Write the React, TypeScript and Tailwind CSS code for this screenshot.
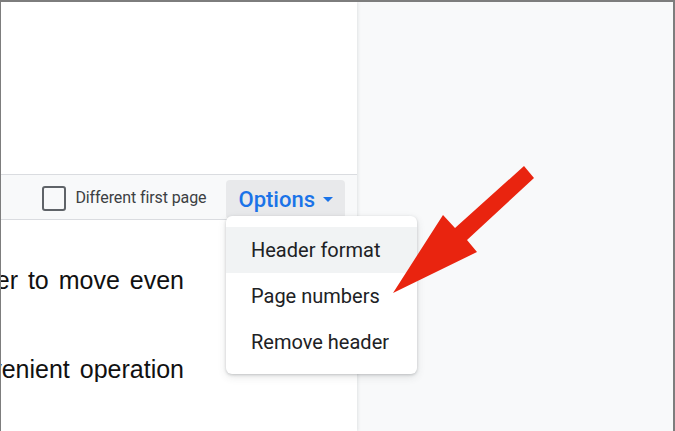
import React from "react";

export default function App() {
  return (
    <div className="relative w-[675px] h-[431px] overflow-hidden border-t-2 border-l border-r-2 border-[#7d7d7d] bg-[#f8f9fa] flex">
      <div className="w-[356px] h-full bg-white flex flex-col shadow-[1px_0_3px_rgba(60,64,67,0.12)] overflow-hidden">
        <div className="h-[172px] shrink-0" />
        <div className="h-[46px] shrink-0 border-y border-[#dadce0] bg-[#f8f9fa] flex items-center justify-end pr-[12px] font-['Roboto',sans-serif]">
          <div className="w-[24px] h-[25px] rounded-[3px] border-[2.5px] border-[#5f6368] mr-[9px] mt-[2px]" />
          <span className="text-[16px] tracking-[-0.1px] text-[#3c4043] mr-[20px] mt-[2px]">Different first page</span>
          <div className="h-[39px] mt-[5px] flex items-center pl-[12px] pr-[12px] rounded-[4px] bg-[#e8e9eb]">
            <span className="text-[22px] font-medium text-[#1a73e8] leading-none">Options</span>
            <svg width="10" height="6" viewBox="0 0 10 6" className="ml-[8px] mt-[1px]">
              <polygon points="0,0 10,0 5,5" fill="#1a73e8" />
            </svg>
          </div>
        </div>
        <div className="font-['Liberation_Sans',Arial,sans-serif] text-[25px] leading-[25px] text-[#111] [word-spacing:3px]">
          <div className="mt-[48px] w-[183px] flex justify-end overflow-hidden whitespace-nowrap">
            <span>the header to move even</span>
          </div>
          <div className="mt-[64px] w-[183px] flex justify-end overflow-hidden whitespace-nowrap">
            <span>for convenient operation</span>
          </div>
        </div>
      </div>

      <div className="absolute left-[225px] top-[214px] w-[191px] h-[158px] bg-white rounded-[6px] shadow-[0_1px_3px_rgba(60,64,67,0.25),0_3px_8px_rgba(60,64,67,0.12)] pt-[11px] font-['Roboto',sans-serif] text-[20px] text-[#202124]">
        <div className="h-[46px] flex items-center pl-[25px] bg-[#f1f3f4]">Header format</div>
        <div className="h-[46px] flex items-center pl-[25px]">Page numbers</div>
        <div className="h-[46px] flex items-center pl-[25px]">Remove header</div>
      </div>

      <svg className="absolute left-[-1px] top-[-2px]" width="675" height="431" viewBox="0 0 675 431">
        <polygon
          points="393,293 443,215 455,228 524,166 534,178 467,240 477,252"
          fill="#e9240f"
        />
      </svg>
    </div>
  );
}
